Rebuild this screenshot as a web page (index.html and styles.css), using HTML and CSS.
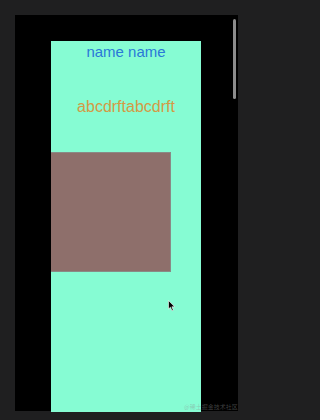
FILE: index.html
```html
<!DOCTYPE html>
<html>
<head>
<meta charset="utf-8">
<link rel="stylesheet" href="styles.css">
</head>
<body>
<div class="frame">
  <div class="panel">
    <p class="name">name name</p>
    <p class="code">abcdrftabcdrft</p>
    <div class="box"></div>
  </div>
  <div class="scrollbar"></div>
</div>
<svg class="cursor" width="8" height="12" viewBox="0 0 8 12"><path d="M0.5 0.5 L0.5 9 L2.5 7.2 L4 10.8 L5.3 10.2 L3.9 6.8 L6.6 6.8 Z" fill="#000" stroke="#fff" stroke-width="0.6"/></svg>
<div class="mark">@稀土掘金技术社区</div>
</body>
</html>
```
FILE: styles.css
```css
html {
  background: #1f1f20;
}
body {
  margin: 0;
  padding: 0;
  background: #1f1f20;
  height: 420px;
  overflow: hidden;
  position: relative;
}
.frame {
  position: relative;
  margin: 15px 0 0 15px;
  width: 223px;
  height: 396px;
  background: #000;
}
.panel {
  position: relative;
  margin-left: 36px;
  top: 26px;
  width: 150px;
  height: 371px;
  background: #86fcd3;
  display: flex;
  flex-direction: column;
  align-items: center;
  font-family: "Liberation Sans", Arial, sans-serif;
}
.name {
  margin: 0;
  padding-top: 2px;
  font-size: 15px;
  line-height: 18px;
  color: #2a78d8;
}
.code {
  margin: 36px 0 0;
  font-size: 16px;
  line-height: 20px;
  color: #d49a45;
}
.box {
  align-self: flex-start;
  margin-top: 35px;
  width: 119px;
  height: 118px;
  background: #8e6f6b;
  border: 1px solid #8a8a86;
  border-left: none;
}
.scrollbar {
  position: absolute;
  left: 218px;
  top: 4px;
  width: 3px;
  height: 80px;
  border-radius: 2px;
  background: #8c8c8c;
}
.cursor {
  position: absolute;
  left: 168px;
  top: 300px;
}
.mark {
  position: absolute;
  left: 184px;
  top: 403px;
  font-family: "Noto Sans CJK SC", sans-serif;
  font-size: 6px;
  line-height: 8px;
  color: rgba(140, 140, 140, 0.45);
  white-space: nowrap;
}
```
